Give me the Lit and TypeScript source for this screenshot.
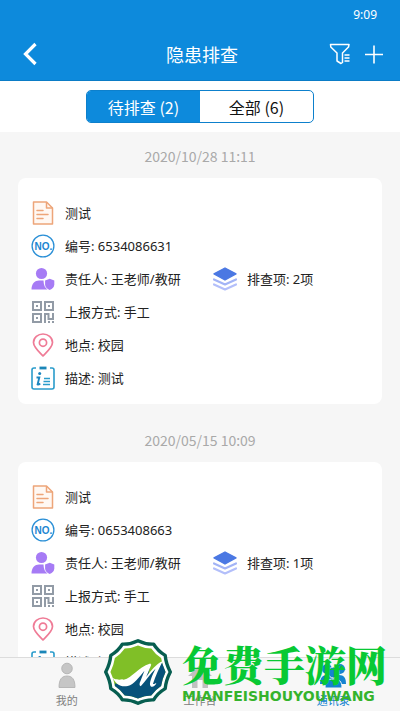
import { LitElement, html, svg, css } from "lit";
import { customElement, property, state } from "lit/decorators.js";
import { classMap } from "lit/directives/class-map.js";

type IconName = "doc" | "no" | "person" | "qr" | "pin" | "info" | "layers";

interface Inspection {
  date: string;
  title: string;
  code: string;
  owner: string;
  items: number;
  method: string;
  place: string;
  description: string;
}

const inspections: Inspection[] = [
  {
    date: "2020/10/28 11:11",
    title: "测试",
    code: "6534086631",
    owner: "王老师/教研",
    items: 2,
    method: "手工",
    place: "校园",
    description: "测试",
  },
  {
    date: "2020/05/15 10:09",
    title: "测试",
    code: "0653408663",
    owner: "王老师/教研",
    items: 1,
    method: "手工",
    place: "校园",
    description: "测试",
  },
];

const icons = {
  doc: svg`
    <path d="M2.5 1H15.5L21.5 7V23H2.5Z" fill="#fff8f3" stroke="#eda579" stroke-width="1.5" stroke-linejoin="round"/>
    <path d="M15.5 1V7H21.5" fill="none" stroke="#eda579" stroke-width="1.5" stroke-linejoin="round"/>
    <path d="M6 9.5H12M6 13.5H17M6 17.5H12" stroke="#eda579" stroke-width="1.5" stroke-linecap="round"/>`,
  no: svg`
    <circle cx="12" cy="12" r="10.9" fill="#fff" stroke="#2a8fd6" stroke-width="1.3"/>
    <text x="12.500" y="15.6" text-anchor="middle" font-family="Liberation Sans, sans-serif" font-weight="700" font-size="10" fill="#1b86d2">NO.</text>`,
  person: svg`
    <circle cx="10.5" cy="6.5" r="5.6" fill="#a67bf5"/>
    <path d="M0.5 22.5C0.5 16.5 4 13.4 8 13.4H12.5C12.6 18 14 20.8 16.5 22.5Z" fill="#a67bf5"/>
    <path d="M18.7 11.8L23.3 13.5V17.5C23.3 20 21.5 22 18.7 23C15.9 22 14.1 20 14.1 17.5V13.5Z" fill="#a67bf5"/>`,
  qr: svg`
    <g fill="none" stroke="#929ba6" stroke-width="2">
      <rect x="2" y="2" width="8" height="8"/><rect x="14" y="2" width="8" height="8"/><rect x="2" y="14" width="8" height="8"/>
      <path d="M14 23V14H17.5V19H22V13"/>
    </g>
    <path d="M5 5H7V7H5ZM17 5H19V7H17ZM5 17H7V19H5ZM17 21H19V23H17ZM21 21H23V23H21Z" fill="#929ba6"/>`,
  pin: svg`
    <path d="M12 23C7 18 2.500 14 2.500 9.500C2.500 4.500 7 1 12 1S21.500 4.500 21.500 9.500C21.500 14 17 18 12 23Z" fill="#fff" stroke="#ef7b96" stroke-width="1.7" stroke-linejoin="round"/>
    <circle cx="12" cy="9.7" r="3.6" fill="none" stroke="#ef7b96" stroke-width="1.7"/>`,
  info: svg`
    <path d="M5 2H3Q1 2 1 4V21Q1 23 3 23H21Q23 23 23 21V4Q23 2 21 2H19" fill="none" stroke="#2a9ccb" stroke-width="1.6"/>
    <path d="M8.5 2H15.5" stroke="#1b86b8" stroke-width="2.8"/>
    <circle cx="8.7" cy="7.5" r="1.5" fill="#1b86c0"/>
    <path d="M5.5 11.5H8.3L6.6 18.5Q7.5 19 9.2 17.5" fill="none" stroke="#1b86c0" stroke-width="1.9"/>
    <path d="M13 12.5H19M12.5 15.5H19M12 18.5H19" stroke="#2a9ccb" stroke-width="1.3"/>`,
  layers: svg`
    <path d="M1 17.500L12 22.500L23 17.500" fill="none" stroke="#b3bffa" stroke-width="2.2" stroke-linejoin="round" stroke-linecap="round"/>
    <path d="M1 12.500L12 17.500L23 12.500" fill="none" stroke="#a3b4f6" stroke-width="2.2" stroke-linejoin="round" stroke-linecap="round"/>
    <path d="M12 1L23 6.8L12 13L1 6.8Z" fill="#4b78e3" stroke="#4b78e3" stroke-width="1.4" stroke-linejoin="round"/>`,
};

@customElement("field-item")
class FieldItem extends LitElement {
  @property() icon: IconName = "doc";
  @property() text = "";

  static styles = css`
    :host {
      display: flex;
      align-items: center;
      gap: 10px;
      height: 33px;
      padding-left: 13px;
      font-size: 13px;
      color: #222;
      white-space: nowrap;
    }
    svg {
      width: 24px;
      height: 24px;
      flex: none;
    }
  `;

  render() {
    return html`<svg viewBox="0 0 24 24" aria-hidden="true">${icons[this.icon]}</svg><span>${this.text}</span>`;
  }
}

@customElement("inspection-card")
class InspectionCard extends LitElement {
  @property({ attribute: false }) data!: Inspection;

  static styles = css`
    :host {
      display: block;
      margin: 0 18px 26px;
    }
    time {
      display: block;
      margin-bottom: 12px;
      text-align: center;
      font: 14px/20px "Noto Sans CJK SC", sans-serif;
      color: #a9a9a9;
    }
    article {
      display: grid;
      grid-template-columns: 1fr 1fr;
      padding: 18px 0 10px;
      border-radius: 8px;
      background: #fff;
    }
    .start {
      grid-column: 1;
    }
  `;

  render() {
    const d = this.data;
    return html`
      <time>${d.date}</time>
      <article>
        <field-item class="start" icon="doc" .text=${d.title}></field-item>
        <field-item class="start" icon="no" .text=${`编号: ${d.code}`}></field-item>
        <field-item class="start" icon="person" .text=${`责任人: ${d.owner}`}></field-item>
        <field-item icon="layers" .text=${`排查项: ${d.items}项`}></field-item>
        <field-item class="start" icon="qr" .text=${`上报方式: ${d.method}`}></field-item>
        <field-item class="start" icon="pin" .text=${`地点: ${d.place}`}></field-item>
        <field-item class="start" icon="info" .text=${`描述: ${d.description}`}></field-item>
      </article>
    `;
  }
}

@customElement("site-mark")
class SiteMark extends LitElement {
  static styles = css`
    :host {
      display: flex;
      align-items: center;
      gap: 10px;
      pointer-events: none;
    }
    svg {
      width: 68px;
      height: 66px;
      flex: none;
    }
    .words {
      display: flex;
      flex-direction: column;
      white-space: nowrap;
    }
    .name {
      font: 900 41px/48px "Noto Serif CJK SC", "Noto Sans CJK SC", serif;
      color: #08c934;
    }
    .latin {
      font: 700 14px/16px "DejaVu Sans", sans-serif;
      color: #35b32c;
    }
  `;

  render() {
    return html`
      <svg viewBox="0 0 200 194" aria-hidden="true">
        <path d="M100 5Q122 16 146 15Q158 35 180 48Q182 72 195 97Q182 122 180 146Q158 159 146 179Q122 178 100 189Q78 178 54 179Q42 159 20 146Q18 122 5 97Q18 72 20 48Q42 35 54 15Q78 16 100 5Z" fill="#fff" stroke="#075e50" stroke-width="10" stroke-linejoin="round"/>
        <path d="M100 19Q120 28 139 28Q151 45 168 56Q171 76 181 97Q171 118 168 138Q151 149 139 166Q120 166 100 175Q80 166 61 166Q49 149 32 138Q29 118 19 97Q29 76 32 56Q49 45 61 28Q80 28 100 19Z" fill="#80bf27"/>
        <path d="M32 130C60 142 78 126 96 100L136 76L130 108L170 68L181 97Q171 118 168 138Q151 149 139 166Q120 166 100 175Q80 166 61 166Q49 149 32 138Z" fill="#07527a"/>
        <path d="M26 114C32 120 36 118 42 119C48 122 52 115 58 120C84 114 98 84 136 72L139 76L124 112C137 96 152 74 173 65C163 84 151 110 144 132C148 134 151 129 154 129C149 142 136 145 135 132C137 117 146 99 152 87C137 101 124 122 108 139C103 137 104 130 107 124L119 93C103 112 88 134 70 138C50 143 34 133 26 114Z" fill="#fff"/>
      </svg>
      <div class="words">
        <span class="name">免费手游网</span>
        <span class="latin">MIANFEISHOUYOUWANG</span>
      </div>
    `;
  }
}

@customElement("app-root")
class AppRoot extends LitElement {
  @state() private filter: "pending" | "all" = "pending";

  static styles = css`
    :host {
      position: relative;
      display: flex;
      flex-direction: column;
      height: 100vh;
      overflow: hidden;
      background: #f6f6f6;
      font-family: "Noto Sans", "Noto Sans CJK SC", sans-serif;
    }
    button {
      padding: 0;
      border: 0;
      background: none;
      color: inherit;
      font: inherit;
      cursor: pointer;
    }
    header {
      flex: none;
      background: #0d8adc;
      color: #fff;
    }
    .status {
      padding: 5px 23px 2px;
      text-align: right;
      font-size: 12px;
      line-height: 20px;
    }
    .bar {
      display: grid;
      grid-template-columns: 1fr auto 1fr;
      align-items: center;
      height: 54px;
      padding: 0 15px 0 19px;
      box-sizing: border-box;
      border-bottom: 1px solid #0b7cc6;
    }
    h1 {
      margin: 0;
      font-size: 18px;
      font-weight: 400;
    }
    .bar svg {
      display: block;
      width: 22px;
      height: 24px;
    }
    .back {
      justify-self: start;
    }
    .actions {
      display: flex;
      justify-content: flex-end;
      gap: 12px;
    }
    .filter {
      flex: none;
      display: flex;
      justify-content: center;
      padding: 9px 0;
      background: #fff;
    }
    .segments {
      display: grid;
      grid-template-columns: 1fr 1fr;
      width: 57%;
      height: 33px;
      box-sizing: border-box;
      overflow: hidden;
      border: 1px solid #0d80cc;
      border-radius: 5px;
      font-family: "Noto Sans CJK SC", sans-serif;
      font-size: 16px;
      line-height: 30px;
      color: #111;
    }
    .segments .on {
      background: #0d8adc;
      color: #fff;
    }
    main {
      flex: 1;
      min-height: 0;
      padding-top: 14px;
      overflow-y: auto;
      scrollbar-width: none;
    }
    nav {
      flex: none;
      display: grid;
      grid-template-columns: repeat(3, 1fr);
      height: 54px;
      box-sizing: border-box;
      border-top: 1px solid #dcdcdc;
      background: #f7f7f7;
    }
    nav a {
      display: flex;
      flex-direction: column;
      align-items: center;
      gap: 4px;
      padding-top: 4px;
      font-size: 11px;
      line-height: 16px;
      color: #808080;
      text-decoration: none;
    }
    nav svg {
      width: 28px;
      height: 27px;
    }
    nav .current {
      color: #1583d0;
    }
    site-mark {
      position: absolute;
      right: 13px;
      bottom: 6px;
    }
  `;

  private segment(id: "pending" | "all", label: string) {
    return html`<button
      class=${classMap({ on: this.filter === id })}
      aria-pressed=${this.filter === id ? "true" : "false"}
      @click=${() => (this.filter = id)}
    >${label}</button>`;
  }

  render() {
    return html`
      <header>
        <div class="status">9:09</div>
        <div class="bar">
          <button class="back" aria-label="返回">
            <svg viewBox="0 0 22 24"><path d="M16.500 2L6.500 12L16.500 22" fill="none" stroke="#fff" stroke-width="3.2"/></svg>
          </button>
          <h1>隐患排查</h1>
          <div class="actions">
            <button aria-label="筛选">
              <svg viewBox="0 0 22 24" fill="none" stroke="#fff" stroke-width="1.5" stroke-linejoin="round">
                <path d="M1.5 2.5H20L19.5 5L13.5 11V20.5L12 21.5L8 19V11L1.8 5Z"/>
                <path d="M15.5 13H20.5M15.5 16H20.5M15.5 19H20.5"/>
              </svg>
            </button>
            <button aria-label="新增">
              <svg viewBox="0 0 22 24"><path d="M2 12.500H20M11 3.500V21.500" stroke="#fff" stroke-width="1.6"/></svg>
            </button>
          </div>
        </div>
      </header>
      <div class="filter">
        <div class="segments">
          ${this.segment("pending", "待排查 (2)")}${this.segment("all", "全部 (6)")}
        </div>
      </div>
      <main>
        ${inspections.map((item) => html`<inspection-card .data=${item}></inspection-card>`)}
      </main>
      <nav>
        <a href="#mine">
          <svg viewBox="0 0 28 27" fill="#c6c6c6" stroke="#adadad" stroke-width="0.8"><circle cx="14" cy="6.5" r="5.3"/><path d="M6 25.5C6 17 9 14 14 14S22 17 22 25.5Z"/></svg>
          我的
        </a>
        <a href="#work">
          <svg viewBox="0 0 28 27" fill="#c0c0c0"><path d="M14 3L26 14H22V26H16.5V18H11.5V26H6V14H2Z"/></svg>
          工作台
        </a>
        <a href="#contacts" class="current">
          <svg viewBox="0 0 28 27" fill="#1583d0"><circle cx="8" cy="7" r="5"/><circle cx="21" cy="7" r="5"/><path d="M1 22C1 15 4 13 8 13H20C25 13 27 16 27 22Z"/><g stroke="#f7f7f7"><circle cx="14.5" cy="10.5" r="5.5"/><path d="M6 26C6 19 9 17 14.5 17S23 19 23 26Z"/></g></svg>
          通讯录
        </a>
      </nav>
      <site-mark></site-mark>
    `;
  }
}
